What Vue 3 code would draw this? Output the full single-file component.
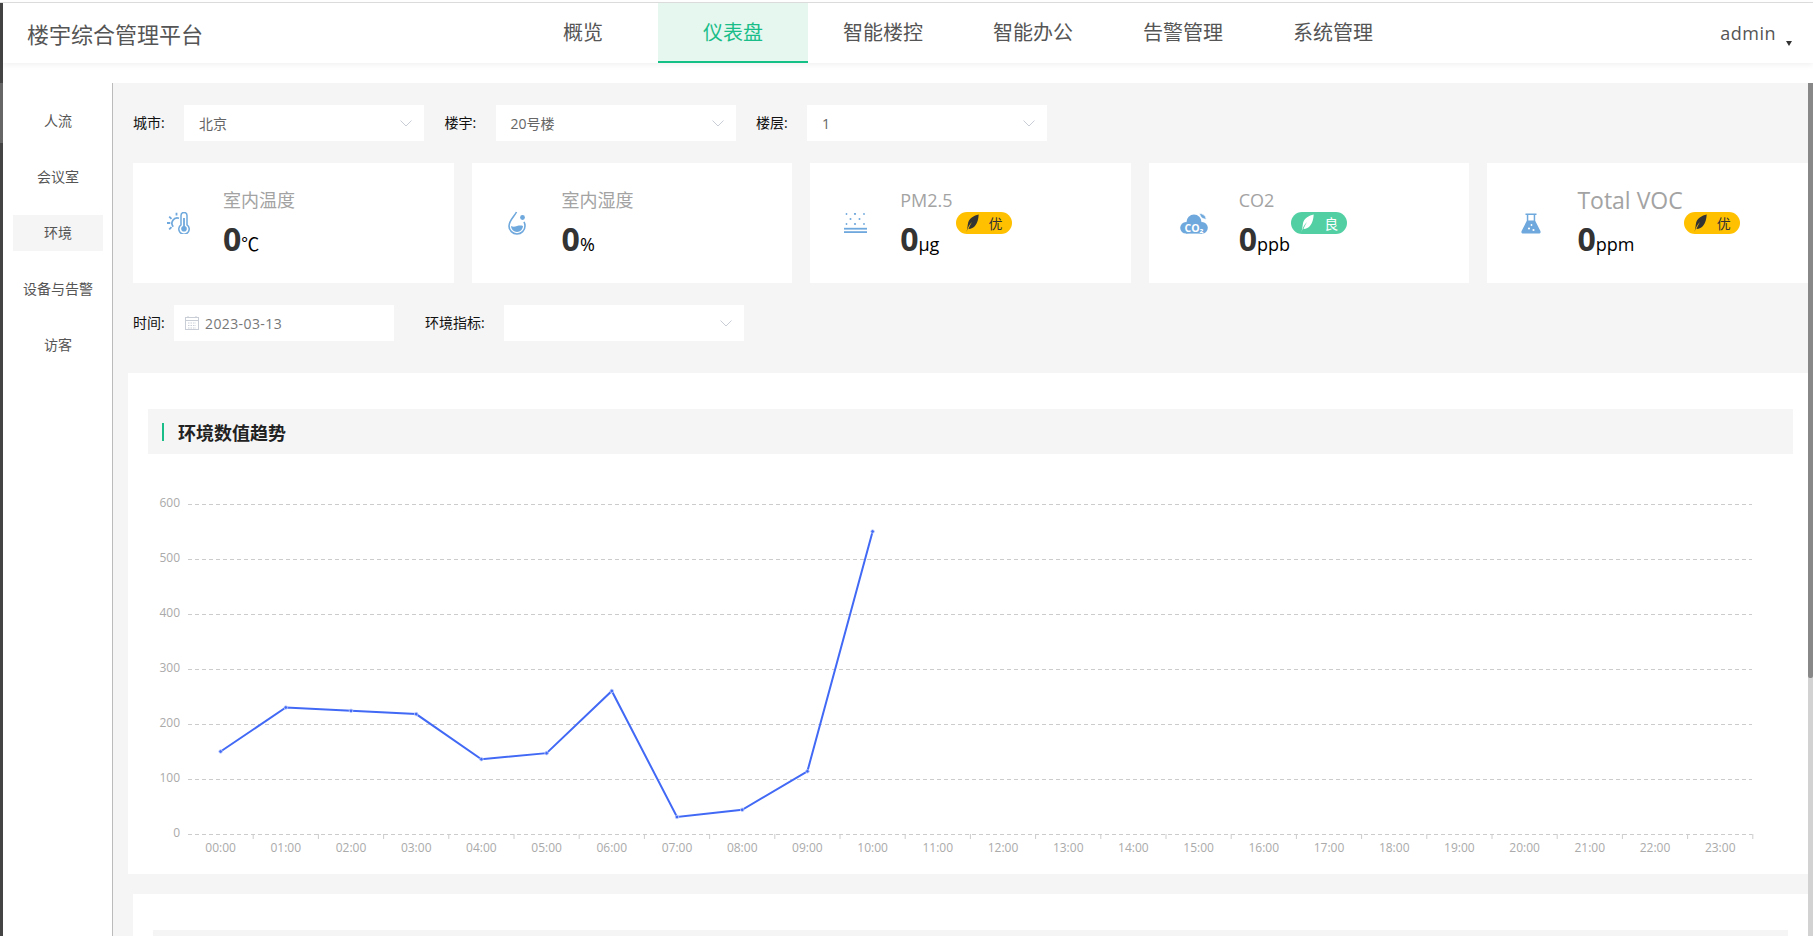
<script setup>
const navItems = ['概览', '仪表盘', '智能楼控', '智能办公', '告警管理', '系统管理']
const sideItems = ['人流', '会议室', '环境', '设备与告警', '访客']
const filters = [
  { label: '城市:', value: '北京' },
  { label: '楼宇:', value: '20号楼' },
  { label: '楼层:', value: '1' }
]
const cards = [
  { id: 'temp', title: '室内温度', unit: '℃' },
  { id: 'hum', title: '室内湿度', unit: '%' },
  { id: 'pm', title: 'PM2.5', unit: 'μg', badge: '优' },
  { id: 'co2', title: 'CO2', unit: 'ppb', badge: '良', good: true },
  { id: 'voc', title: 'Total VOC', unit: 'ppm', badge: '优', large: true }
]
const x0 = 188, band = 65.2, base = 834, step = 55
const yTicks = [0, 100, 200, 300, 400, 500, 600].map((v, i) => ({ v, y: base - i * step }))
const hours = Array.from({ length: 24 }, (_, i) => ({
  label: String(i).padStart(2, '0') + ':00',
  cx: x0 + band * (i + 0.5),
  tick: x0 + band * (i + 1)
}))
const data = [150, 230, 224, 218, 136, 147, 260, 31, 44, 114, 550]
const pts = data.map((v, i) => ({ x: x0 + band * (i + 0.5), y: base - (v / 100) * step }))
const linePoints = pts.map(p => `${p.x},${p.y}`).join(' ')
</script>

<template>
  <div class="page">
    <div class="top-edge"></div>
    <div class="frame">
      <div class="strip"><div class="strip-mark"></div></div>
      <div class="content">
        <header class="header">
          <div class="brand">楼宇综合管理平台</div>
          <nav class="nav">
            <div v-for="(n, i) in navItems" :key="n" class="nav-item" :class="{ active: i === 1 }">{{ n }}</div>
          </nav>
          <div class="user">
            <span>admin</span>
            <i class="caret"></i>
          </div>
        </header>

        <div class="body">
          <aside class="side">
            <div v-for="(s, i) in sideItems" :key="s" class="side-item" :class="{ active: i === 2 }">{{ s }}</div>
          </aside>

          <main class="main">
            <div class="filters">
              <template v-for="f in filters" :key="f.label">
                <span class="flabel">{{ f.label }}</span>
                <div class="select">
                  <span>{{ f.value }}</span>
                  <svg class="chev" width="12" height="7" viewBox="0 0 12 7"><polyline points="0.5,0.5 6,6 11.5,0.5" fill="none" stroke="#c9ced6" stroke-width="1" /></svg>
                </div>
              </template>
            </div>

            <div class="cards">
              <div v-for="c in cards" :key="c.id" class="card">
                <div class="icon-box">
                  <svg v-if="c.id === 'temp'" width="23" height="22" viewBox="0 0 23 22" fill="none" stroke="#6fa8dc">
                    <path d="M14 3.500a3 3 0 0 1 6 0v9.300a5.200 5.200 0 1 1-6 0z" stroke-width="1.500" />
                    <circle cx="17" cy="16.800" r="2.800" fill="#6fa8dc" stroke="none" />
                    <path d="M17 6v10" stroke-width="1.800" />
                    <path d="M12 6.300a5.300 5.300 0 0 0-5.800 8.400" stroke-width="1.700" />
                    <path d="M0 11h3.300M2.200 4.600l2.300 2.300M2.200 17.400l2.300-2.300M9.500 .8v2.600" stroke-width="1.800" />
                  </svg>
                  <svg v-else-if="c.id === 'hum'" class="shift-right" width="20" height="24" viewBox="0 0 20 24" fill="none" stroke="#6fa8dc">
                    <path d="M8.500 1C6.500 5 1 9.500 1 15a8 8 0 0 0 16 0c0-1.500-.3-3-1-4.200" stroke-width="1.600" />
                    <path d="M3 15c2.500 1.200 4 .5 6 0s4-.6 6 0a6 6 0 0 1-12 0z" fill="#6fa8dc" stroke="none" />
                    <circle cx="14.500" cy="6.500" r="2.400" fill="#6fa8dc" stroke="none" />
                  </svg>
                  <svg v-else-if="c.id === 'pm'" width="23" height="20" viewBox="0 0 23 20" fill="#6fa8dc">
                    <circle cx="2.500" cy="1" r="0.900" /><circle cx="11" cy="1" r="1.100" /><circle cx="20" cy="1" r="0.900" />
                    <circle cx="6.500" cy="6" r="1" /><circle cx="15.500" cy="6" r="1" />
                    <circle cx="2.500" cy="11" r="0.900" /><circle cx="11" cy="11" r="1.100" /><circle cx="20" cy="11" r="0.900" />
                    <rect x="0" y="14.800" width="23" height="1.800" />
                    <rect x="0" y="18.200" width="23" height="1.800" />
                  </svg>
                  <svg v-else-if="c.id === 'co2'" class="shift-left" width="29" height="21" viewBox="0 0 29 21">
                    <g fill="#6fa8dc">
                      <circle cx="14" cy="9" r="7.500" />
                      <circle cx="6" cy="14.800" r="5.800" />
                      <circle cx="22" cy="14.800" r="5.800" />
                      <rect x="6" y="12" width="16" height="8.600" />
                      <path d="M19.500 .3c3 .3 6 2 6.800 5.800-3.200.3-6-1.500-6.800-5.800z" stroke="#fff" stroke-width="0.700" />
                    </g>
                    <text x="14" y="18.800" class="co2-text" text-anchor="middle">CO₂</text>
                  </svg>
                  <svg v-else width="20" height="21" viewBox="0 0 20 21" fill="#6fa8dc">
                    <path d="M4.500 .5h11v1.500h-1.300v5.800l5.200 10.300c.6 1.300-.2 2.500-1.700 2.500H2.300c-1.500 0-2.300-1.200-1.700-2.500L5.800 7.800V2H4.500z" />
                    <path d="M7.300 2h5.400v5.500H7.300z" fill="#fff" />
                    <circle cx="8" cy="15.500" r="1.100" fill="#fff" /><circle cx="12.500" cy="17" r="1.100" fill="#fff" /><circle cx="10.500" cy="12" r="0.900" fill="#fff" />
                  </svg>
                </div>
                <div class="stat">
                  <div class="stat-title" :class="{ large: c.large }">{{ c.title }}</div>
                  <div class="stat-value"><b>0</b><span>{{ c.unit }}</span></div>
                </div>
                <div v-if="c.badge" class="badge" :class="[c.id, { good: c.good }]">
                  <svg width="13" height="18" viewBox="0 0 13 18"><path d="M.5 18c1-3.500 2.500-7 5.500-10-2 3.500-3 5.500-3.500 7 5.500 0 9.800-5 10.200-14.500C8.200 1.500 2.500 4 1.800 10.500 1.500 13 1.200 15.500.5 18z" fill="currentColor" /></svg>
                  <span>{{ c.badge }}</span>
                </div>
              </div>
            </div>

            <div class="filters second">
              <span class="flabel">时间:</span>
              <div class="date">
                <svg width="14" height="14" viewBox="0 0 14 14" fill="none" stroke="#c9ced6"><rect x="0.500" y="1.500" width="13" height="12" /><path d="M0.500 4.500h13M3 0v2M11 0v2" /><path d="M3 7h8M3 9.500h8M3 12h8" stroke-dasharray="1.500 1" /></svg>
                <span>2023-03-13</span>
              </div>
              <span class="flabel env">环境指标:</span>
              <div class="select">
                <span></span>
                <svg class="chev" width="12" height="7" viewBox="0 0 12 7"><polyline points="0.5,0.5 6,6 11.5,0.5" fill="none" stroke="#c9ced6" stroke-width="1" /></svg>
              </div>
            </div>

            <section class="panel trend">
              <div class="panel-title"><i></i><span>环境数值趋势</span></div>
              <svg class="chart" width="1680" height="420" viewBox="128 454 1680 420">
                <g v-for="t in yTicks" :key="t.v">
                  <line :x1="188" :x2="1752" :y1="t.y + 0.5" :y2="t.y + 0.5" stroke="#ccc" stroke-dasharray="4 3" />
                  <text x="180" :y="t.y + 3" class="axis" text-anchor="end">{{ t.v }}</text>
                </g>
                <g v-for="h in hours" :key="h.label">
                  <line :x1="h.tick" :x2="h.tick" y1="834" y2="839" stroke="#ccc" />
                  <text :x="h.cx" y="852" class="axis" text-anchor="middle">{{ h.label }}</text>
                </g>
                <polyline :points="linePoints" fill="none" stroke="#4169f5" stroke-width="2" />
                <circle v-for="(p, i) in pts" :key="i" :cx="p.x" :cy="p.y" r="1.800" fill="#4169f5" stroke="#c3d0fc" stroke-width="0.800" />
              </svg>
            </section>

            <section class="panel next">
              <div class="panel-title"></div>
            </section>
          </main>

          <div class="scrollbar"><div class="thumb"></div></div>
        </div>
      </div>
    </div>
  </div>
</template>

<style>
html, body { margin: 0; overflow: hidden; background: #fff; }
</style>

<style scoped>
.page {
  width: 1813px;
  height: 936px;
  overflow: hidden;
  display: flex;
  flex-direction: column;
  background: #fff;
  font-family: "Open Sans", "Noto Sans CJK SC", sans-serif;
}
.top-edge { height: 2px; border-bottom: 1px solid #dedede; flex: none; }
.frame { flex: 1; display: flex; min-height: 0; }
.strip { width: 3px; background: #444; flex: none; }
.strip-mark { height: 60px; margin-top: 80px; background: #666; }
.content { flex: 1; display: flex; flex-direction: column; min-width: 0; }

.header {
  height: 60px;
  flex: none;
  display: flex;
  align-items: center;
  position: relative;
  background: #fff;
  box-shadow: 0 2px 6px rgba(0, 0, 0, 0.06);
}
.brand { width: 505px; padding-left: 24px; box-sizing: border-box; font-size: 22px; color: #555; }
.nav { display: flex; height: 100%; }
.nav-item {
  width: 150px;
  line-height: 60px;
  text-align: center;
  font-size: 20px;
  color: #555;
}
.nav-item.active {
  height: 58px;
  line-height: 60px;
  color: #19bd88;
  background: #e6f7f0;
  border-bottom: 2px solid #14c086;
}
.user {
  margin-left: auto;
  display: flex;
  align-items: center;
  padding-right: 21px;
  font-size: 18px;
  letter-spacing: 0.5px;
  color: #555;
}
.caret {
  margin-left: 10px;
  margin-top: 20px;
  border-left: 3.5px solid transparent;
  border-right: 3.5px solid transparent;
  border-top: 5px solid #333;
}

.body { flex: 1; display: flex; margin-top: 20px; min-height: 0; }
.side {
  flex: none;
  width: 99px;
  border-right: 1px solid #bbb;
  padding: 20px 0 0 10px;
}
.side-item {
  width: 90px;
  height: 36px;
  line-height: 36px;
  margin-bottom: 20px;
  text-align: center;
  font-size: 14px;
  color: #555;
}
.side-item.active { background: #f5f5f5; }

.main { flex: 1; min-width: 0; background: #f5f5f5; overflow: hidden; }
.filters { display: flex; align-items: center; padding-left: 20px; margin-top: 22px; height: 36px; }
.flabel { font-size: 14px; color: #111; width: 51px; flex: none; position: relative; top: -1px; }
.select {
  width: 240px;
  height: 36px;
  flex: none;
  margin-right: 20.5px;
  padding: 0 12px 0 15px;
  box-sizing: border-box;
  background: #fff;
  display: flex;
  align-items: center;
  justify-content: space-between;
  font-size: 14px;
  color: #666;
}
.cards { display: flex; gap: 18px; padding-left: 20px; margin-top: 22px; }
.card {
  flex: 1;
  min-width: 0;
  height: 120px;
  background: #fff;
  display: flex;
  align-items: center;
}
.icon-box { width: 90px; flex: none; padding-left: 34px; box-sizing: border-box; display: flex; align-items: center; }
.shift-right { margin-left: 2px; }
.shift-left { margin-left: -3px; }
.stat { flex: none; align-self: flex-start; padding-top: 23px; }
.stat-title { font-size: 18px; line-height: 28px; margin-bottom: 3px; color: #a3a3a3; white-space: nowrap; }
.stat-title.large { font-size: 23px; }
.stat-value { line-height: 44px; color: #000; white-space: nowrap; }
.stat-value b { font-size: 32px; font-weight: 700; color: #333; }
.stat-value span { font-size: 18px; }
.badge {
  margin-left: 1px;
  margin-bottom: 1px;
  width: 56px;
  height: 22px;
  border-radius: 11px;
  background: #ffc000;
  color: #333;
  font-size: 14px;
  display: flex;
  align-items: center;
  padding-left: 10px;
  box-sizing: border-box;
  gap: 10px;
  flex: none;
}
.badge.pm { margin-left: 3px; }
.badge.good { background: #52d0a4; color: #fff; }
.co2-text { font-size: 10.5px; font-weight: 700; fill: #fff; font-family: "Open Sans", sans-serif; }

.second .flabel { width: 41px; }
.second .flabel.env { width: 79px; margin-left: 31px; }
.date {
  width: 220px;
  height: 36px;
  flex: none;
  background: #fff;
  display: flex;
  align-items: center;
  gap: 6px;
  padding-left: 11px;
  box-sizing: border-box;
  font-size: 14px;
  letter-spacing: 0.4px;
  color: #777;
}

.panel { background: #fff; padding-top: 36px; box-sizing: border-box; }
.trend { margin: 32px 0 0 15px; height: 501px; }
.next { margin: 20px 0 0 20px; height: 200px; padding-left: 20px; padding-right: 20px; }
.panel-title {
  height: 45px;
  margin: 0 15px 0 20px;
  background: #f5f5f5;
  display: flex;
  align-items: center;
  gap: 14px;
  padding-left: 14px;
  font-size: 18px;
  font-weight: 700;
  color: #222;
}
.next .panel-title { margin: 0; }
.panel-title i { width: 2px; height: 18px; background: #19bd88; }
.chart { display: block; }
.axis { font-size: 12px; fill: #aaa; font-family: "Open Sans", sans-serif; }

.scrollbar { width: 5px; flex: none; background: #d2d2d2; }
.thumb { height: 595px; background: #888; border-radius: 0 0 2px 2px; }
</style>
